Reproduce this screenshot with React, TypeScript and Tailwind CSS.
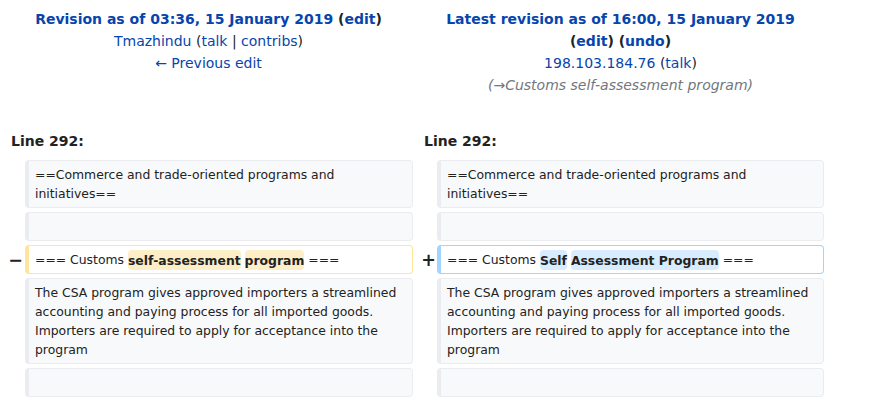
export default function App() {
  const link = "text-[#0645ad]";
  const ctxBox =
    "rounded-[4px] border border-[#eaecf0] border-l-4 bg-[#f8f9fa] px-[6px] py-[4px] leading-[19px]";

  return (
    <div className="h-[401px] w-[874px] overflow-hidden bg-white pl-[4px] font-['DejaVu_Sans',sans-serif] text-[#222]">
      <div className="grid grid-cols-[17px_388px_16px_387px] gap-x-[4px] gap-y-[4px]">
        {/* revision titles */}
        <div className="col-span-2 pt-[8px] text-center text-[14px] leading-[22px]">
          <div className="font-bold">
            <a className={link}>Revision as of 03:36, 15 January 2019</a> (
            <a className={link}>edit</a>)
          </div>
          <div>
            <a className={link}>Tmazhindu</a> (<a className={link}>talk</a> |{" "}
            <a className={link}>contribs</a>)
          </div>
          <div>
            <a className={link}>← Previous edit</a>
          </div>
        </div>
        <div className="col-span-2 pt-[8px] text-center text-[14px] leading-[22px]">
          <div className="font-bold">
            <a className={link}>Latest revision as of 16:00, 15 January 2019</a>
          </div>
          <div className="font-bold">
            (<a className={link}>edit</a>) (<a className={link}>undo</a>)
          </div>
          <div>
            <a className={link}>198.103.184.76</a> (<a className={link}>talk</a>)
          </div>
          <div className="italic text-[#72777d]">(→Customs self-assessment program)</div>
        </div>

        {/* line numbers */}
        <div className="col-span-2 pb-[4px] pl-[7px] pt-[30px] text-[14px] font-bold leading-[22px]">
          Line 292:
        </div>
        <div className="col-span-2 pb-[4px] pl-[7px] pt-[30px] text-[14px] font-bold leading-[22px]">
          Line 292:
        </div>

        {/* context */}
        <div />
        <div className={`${ctxBox} text-[12.4px]`}>==Commerce and trade-oriented programs and initiatives==</div>
        <div />
        <div className={`${ctxBox} text-[12.4px]`}>==Commerce and trade-oriented programs and initiatives==</div>

        <div />
        <div className={ctxBox}>
          <div className="h-[19px]" />
        </div>
        <div />
        <div className={ctxBox}>
          <div className="h-[19px]" />
        </div>

        {/* changed line */}
        <div className="-mr-[2px] self-center text-right text-[17.5px] font-bold leading-[20px]">−</div>
        <div className="rounded-[4px] border border-[#ffe49c] border-l-4 bg-white px-[6px] py-[4px] text-[12.4px] leading-[19px]">
          === Customs{" "}
          <span className="rounded-[4px] bg-[#feeec8] py-[2.5px] font-bold">self-assessment</span>{" "}
          <span className="rounded-[4px] bg-[#feeec8] py-[2.5px] font-bold">program</span> ===
        </div>
        <div className="-mr-[3px] self-center text-right text-[17.5px] font-bold leading-[20px]">+</div>
        <div className="rounded-[4px] border border-[#a3d3ff] border-l-4 bg-white px-[6px] py-[4px] text-[12.4px] leading-[19px]">
          === Customs{" "}
          <span className="rounded-[4px] bg-[#d8ecff] py-[2.5px] font-bold">Self</span>{" "}
          <span className="rounded-[4px] bg-[#d8ecff] py-[2.5px] font-bold">Assessment Program</span> ===
        </div>

        {/* context */}
        <div />
        <div className={`${ctxBox} text-[12.4px]`}>
          The CSA program gives approved importers a streamlined accounting and paying process for all
          imported goods. Importers are required to apply for acceptance into the program
        </div>
        <div />
        <div className={`${ctxBox} text-[12.4px]`}>
          The CSA program gives approved importers a streamlined accounting and paying process for all
          imported goods. Importers are required to apply for acceptance into the program
        </div>

        <div />
        <div className={ctxBox}>
          <div className="h-[19px]" />
        </div>
        <div />
        <div className={ctxBox}>
          <div className="h-[19px]" />
        </div>
      </div>
    </div>
  );
}
